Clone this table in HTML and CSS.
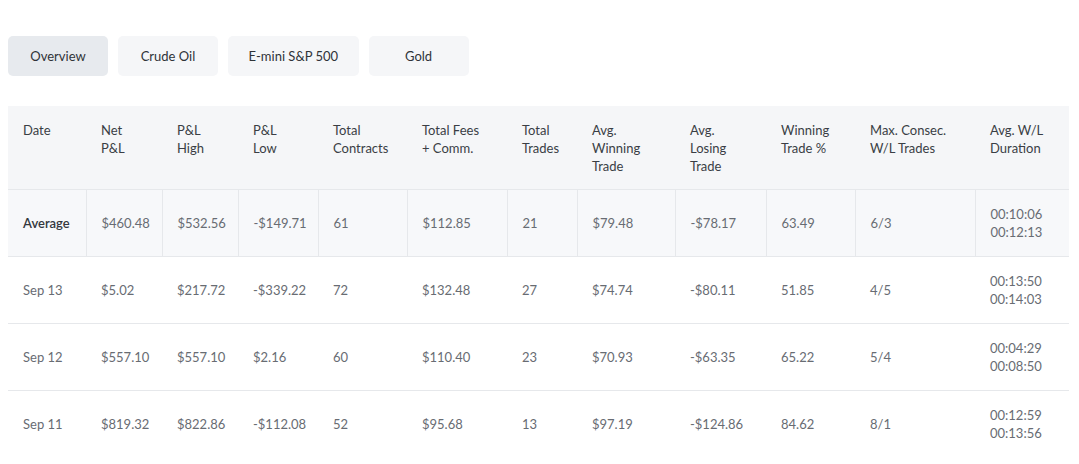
FILE: index.html
```html
<!DOCTYPE html>
<html lang="en">
<head>
<meta charset="utf-8">
<title>Trading Summary</title>
<link rel="stylesheet" href="styles.css">
</head>
<body>
<div class="page">
  <nav class="tabs">
    <button class="tab active">Overview</button>
    <button class="tab">Crude Oil</button>
    <button class="tab">E-mini S&amp;P 500</button>
    <button class="tab">Gold</button>
  </nav>
  <table class="stats">
    <colgroup>
      <col class="c-date"><col class="c-net"><col class="c-high"><col class="c-low"><col class="c-contracts"><col class="c-fees"><col class="c-trades"><col class="c-win"><col class="c-lose"><col class="c-pct"><col class="c-consec"><col class="c-dur">
    </colgroup>
    <thead>
      <tr>
        <th>Date</th>
        <th>Net<br>P&amp;L</th>
        <th>P&amp;L<br>High</th>
        <th>P&amp;L<br>Low</th>
        <th>Total<br>Contracts</th>
        <th>Total Fees<br>+ Comm.</th>
        <th>Total<br>Trades</th>
        <th>Avg.<br>Winning<br>Trade</th>
        <th>Avg.<br>Losing<br>Trade</th>
        <th>Winning<br>Trade %</th>
        <th>Max. Consec.<br>W/L Trades</th>
        <th>Avg. W/L<br>Duration</th>
      </tr>
    </thead>
    <tbody>
      <tr class="avg">
        <td class="label">Average</td>
        <td>$460.48</td><td>$532.56</td><td>-$149.71</td><td>61</td><td>$112.85</td><td>21</td><td>$79.48</td><td>-$78.17</td><td>63.49</td><td>6/3</td><td>00:10:06<br>00:12:13</td>
      </tr>
      <tr>
        <td>Sep 13</td>
        <td>$5.02</td><td>$217.72</td><td>-$339.22</td><td>72</td><td>$132.48</td><td>27</td><td>$74.74</td><td>-$80.11</td><td>51.85</td><td>4/5</td><td>00:13:50<br>00:14:03</td>
      </tr>
      <tr>
        <td>Sep 12</td>
        <td>$557.10</td><td>$557.10</td><td>$2.16</td><td>60</td><td>$110.40</td><td>23</td><td>$70.93</td><td>-$63.35</td><td>65.22</td><td>5/4</td><td>00:04:29<br>00:08:50</td>
      </tr>
      <tr>
        <td>Sep 11</td>
        <td>$819.32</td><td>$822.86</td><td>-$112.08</td><td>52</td><td>$95.68</td><td>13</td><td>$97.19</td><td>-$124.86</td><td>84.62</td><td>8/1</td><td>00:12:59<br>00:13:56</td>
      </tr>
    </tbody>
  </table>
</div>
</body>
</html>
```

FILE: styles.css
```css
* { box-sizing: border-box; }

body {
  margin: 8px;
  background: #ffffff;
  font-family: Lato, "Noto Sans", "Liberation Sans", sans-serif;
  font-size: 13px;
  color: #3a3e45;
}

.page {
  padding-top: 28px;
}

.tabs {
  display: flex;
  gap: 10px;
  margin-bottom: 30px;
}

.tab {
  height: 40px;
  min-width: 100px;
  padding: 0 20.5px;
  border: none;
  border-radius: 5px;
  background: #f5f6f8;
  font-family: inherit;
  font-size: 13px;
  color: #2f3338;
  cursor: pointer;
}

.tab.active {
  background: #e7eaee;
}

.stats {
  width: 1061px;
  table-layout: fixed;
  border-collapse: collapse;
  border-spacing: 0;
}

.c-date { width: 78px; }
.c-net { width: 76px; }
.c-high { width: 76px; }
.c-low { width: 80px; }
.c-contracts { width: 89px; }
.c-fees { width: 100px; }
.c-trades { width: 70px; }
.c-win { width: 98px; }
.c-lose { width: 91px; }
.c-pct { width: 89px; }
.c-consec { width: 120px; }
.c-dur { width: 94px; }

.stats th {
  background: #f5f6f8;
  text-align: left;
  vertical-align: top;
  font-weight: normal;
  color: #3a3e45;
  line-height: 18px;
  padding: 15px 15px 14px;
  border-bottom: 1px solid #e6e8eb;
  white-space: nowrap;
}

.stats td {
  text-align: left;
  vertical-align: middle;
  color: #686c73;
  line-height: 18px;
  padding: 15px;
  border-bottom: 1px solid #e6e8eb;
  white-space: nowrap;
}

.stats tr.avg td {
  background: #f7f8fa;
  border-right: 1px solid #e6e8eb;
}

.stats tr.avg td:last-child {
  border-right: none;
}

.stats tr.avg td.label {
  color: #33373d;
  font-weight: 600;
}

.stats tbody tr:last-child td {
  border-bottom: none;
}
```
